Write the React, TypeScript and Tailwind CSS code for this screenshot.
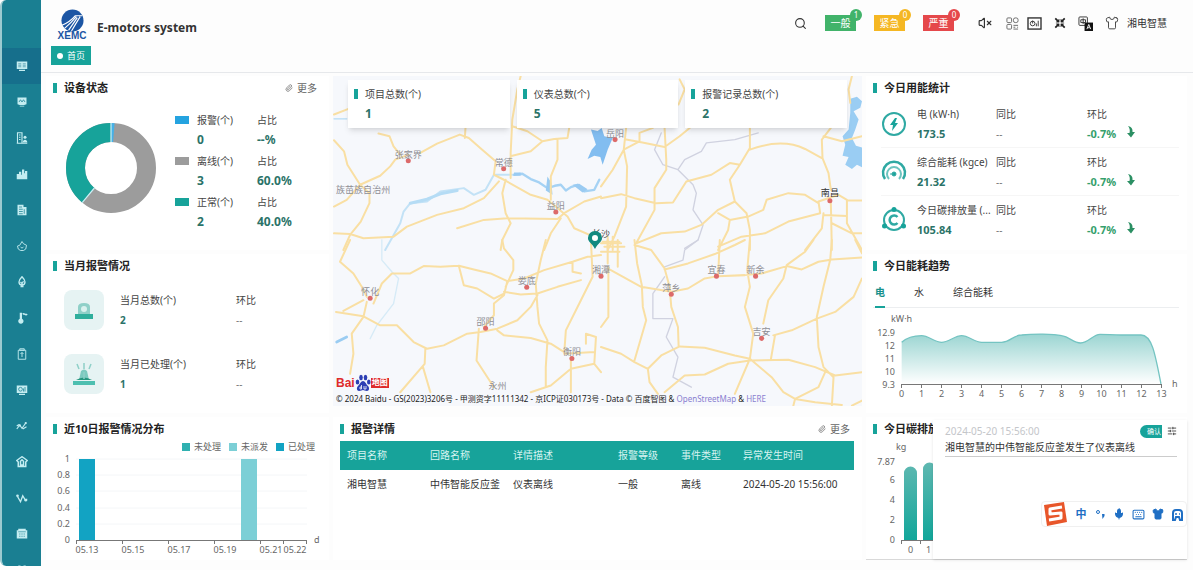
import { useState } from 'react'
import type { ReactNode } from 'react'
import { Search, VolumeX, Shirt, Paperclip, SlidersHorizontal, Mic, Keyboard } from 'lucide-react'

const MENU: { name: string; icon: ReactNode }[] = [
  { name: '首页', icon: <><path d="M1 2h14v10H1zM4 13h8v1.500H4z" fill="currentColor" /><path d="M3 5h4M3 7h4M3 9h4M9 5h4M9 7h4M9 9h4" stroke="#166f8c" strokeWidth=".7" /></> },
  { name: '监控', icon: <><path d="M2 2h12v9l-3 1H5l-3-1zM5 13h6v1H5z" fill="currentColor" /><path d="M4 8l2-3 2 3 2-3 2 3" stroke="#1a7f92" fill="none" /></> },
  { name: '建筑', icon: <><path d="M2 15V1h6v14M1 15h14M4 4h2M4 7h2M4 10h2" stroke="currentColor" strokeWidth="1.500" fill="none" /><circle cx="12" cy="7" r="2" fill="currentColor" /><path d="M9 14c0-5 6-5 6 0z" fill="currentColor" /></> },
  { name: '能源', icon: <path d="M1 15V8h3V5h3v4h1V2h3v5h1V4h3v11z" fill="currentColor" /> },
  { name: '报表', icon: <><path d="M2 1h8v3h4v11H2z" fill="currentColor" /><path d="M4 4h4M4 7h5M4 10h5M4 13h5M11 7v6" stroke="#1a7f92" /></> },
  { name: '燃气', icon: <path d="M8 2l2 3 4 2-1 5-3 2H6l-3-2-1-4 3-1zM6 9l2 2 2-2" stroke="currentColor" strokeWidth="1.200" fill="none" /> },
  { name: '用水', icon: <path d="M8 1c2 2 4 4 4 7a4 4 0 0 1-8 0c0-3 2-5 4-7zM6 8l2 2 2-3M6 14h4" stroke="currentColor" strokeWidth="1.800" fill="none" /> },
  { name: '温度', icon: <><path d="M5 1h3v8a3.500 3.500 0 1 1-3 0z" fill="currentColor" /><path d="M9 3c2-2 3 2 6 0" stroke="currentColor" strokeWidth="2" fill="none" /></> },
  { name: '巡检', icon: <path d="M3 3h10v12H3zM5 1h6v2H5zM8 6v6M6 8l2-2 2 2" stroke="currentColor" strokeWidth="1.200" fill="none" /> },
  { name: '分析', icon: <><path d="M1 2h14v10H1zM4 13h8v1.500H4z" fill="currentColor" /><circle cx="6" cy="7" r="2.500" stroke="#1a7f92" fill="none" /><path d="M10 10V6M12 10V4" stroke="#1a7f92" /></> },
  { name: '趋势', icon: <><path d="M1 12l4-5 3 4 5-7M1 8l3-2M9 12l5-3" stroke="currentColor" strokeWidth="1.500" fill="none" /><circle cx="13" cy="4" r="1.500" fill="currentColor" /><circle cx="5" cy="7" r="1.500" fill="currentColor" /></> },
  { name: '报警', icon: <path d="M5 3l3-2 3 2 4 3-2 2v6H3V8L1 6zM6 7v5h4V7L8 5z" stroke="currentColor" strokeWidth="2" fill="none" /> },
  { name: '曲线', icon: <><path d="M2 6l4 7 3-8 3 5h3" stroke="currentColor" strokeWidth="1.800" fill="none" /><circle cx="2" cy="5" r="1.800" fill="currentColor" /><circle cx="13" cy="11" r="1.800" fill="currentColor" /></> },
  { name: '设备', icon: <><path d="M3 1h10v2h2v11H1V3h2z" fill="currentColor" /><path d="M3 5h10M4 8h2M7 8h2M10 8h2M4 11h2M7 11h2M10 11h2" stroke="#1a7f92" strokeWidth=".8" /></> },
  { name: '系统', icon: <path d="M3 2h3v3H3zM10 2h3v3h-3zM1 7h14v7H1z" fill="currentColor" /> },
]

const STATUS = [
  { label: '报警(个)', count: '0', percent: '--%', swatch: 'bg-[#25a3e0]' },
  { label: '离线(个)', count: '3', percent: '60.0%', swatch: 'bg-[#9c9c9c]' },
  { label: '正常(个)', count: '2', percent: '40.0%', swatch: 'bg-[#17a39a]' },
]

const LEVELS = [
  { label: '一般', count: 1, color: 'bg-[#41b36a]' },
  { label: '紧急', count: 0, color: 'bg-[#f5b723]' },
  { label: '严重', count: 0, color: 'bg-[#e5484b]' },
]

const CITIES = [
  { name: '张家界', x: 408, y: 161 },
  { name: '常德', x: 503, y: 169 },
  { name: '益阳', x: 555, y: 212 },
  { name: '岳阳', x: 614, y: 140 },
  { name: '湘潭', x: 600, y: 276 },
  { name: '怀化', x: 370, y: 298 },
  { name: '娄底', x: 526, y: 287 },
  { name: '邵阳', x: 485, y: 328 },
  { name: '衡阳', x: 571, y: 358 },
  { name: '宜春', x: 715, y: 276 },
  { name: '新余', x: 754, y: 276 },
  { name: '萍乡', x: 670, y: 294 },
  { name: '吉安', x: 760, y: 338 },
]

const ROADS_NW = 'M12 212L42 245 52 285 90 345 118 370 118 400 92 455 60 495 40 540M12 410L50 390 90 345 150 318 180 290 195 270 235 255M145 192L178 200 190 230 210 255M270 250L320 222 388 195 415 205 455 240 495 275 490 315 520 330 600 375 650 390 710 440 730 475 800 505M405 175L403 205M12 490L60 492 100 505 190 500 230 470 320 435 400 415 460 385 505 335M380 475L460 450 530 445 680 447 700 430 760 395 810 380M525 330L515 370 525 430 540 460 515 510 510 540M540 325L540 250 545 150 560 60 570 20M545 170L590 185 635 215 600 245 545 258M635 215L670 208 710 205 715 175M680 210L680 270 660 320 660 390M690 445L660 490 640 540M12 135L55 118'
const ROADS_NE = 'M0 385L60 373 100 385 165 400 215 398 255 335 330 315 385 280 415 285 445 235 445 175M75 175L68 240 78 290 75 410 40 500 20 540M0 350L35 300 68 240 115 215 115 190 155 175M75 210L120 218 190 232 235 200 265 175M190 175L195 270 195 300 160 355 160 420 105 520M445 240Q540 205 610 238L660 265M415 285L385 330 400 395 435 430 445 480 445 540M105 520L180 490 250 485 300 465 350 420 400 395M350 430L385 450 440 440 485 420 495 390 560 370 610 375 650 400M385 450L380 480 350 540M350 530L420 500 490 490 560 455 655 430M655 430L650 395 710 375 735 390 735 460 780 540M735 392L780 392M665 435L735 438M687 400L690 540M665 430L660 475 610 540M690 460L750 490 780 490M687 175L660 210 662 265 680 310 687 360M665 200L720 215 780 200M232 105L250 60 235 30M750 20L740 60 745 100M5 515h50M10 530h60M20 500v40M35 500v40'
const ROADS_SW = 'M60 0L30 65 70 100 95 140 110 170M130 190L155 130 185 100 240 100 280 78 330 80 385 77 430 88 480 100 530 123 580 115 640 90 725 65 770 50 810 45M18 215L100 228 150 255 200 255 250 305 290 325 340 315 410 280 450 275 500 265 560 240 600 200 620 165M40 212L100 180M110 185L100 230 65 280 70 340 60 400M385 77L400 135 440 145 490 175 520 160M530 123L520 165 490 190 490 225 460 260M515 0L520 25 548 60 548 90 525 140M520 155L570 163 620 160 680 140 750 120M645 0L630 60 615 130 620 200 625 250 650 300 645 380 645 440M500 270L520 285 600 293 660 310 700 335M780 0L785 110 750 180 705 270 700 340M285 325L283 370 210 455M278 380L300 455M445 265L438 360 490 440M720 350L720 455M600 455L660 435 720 385 790 370 810 395M725 65L725 95 750 100M765 310L765 280 795 290 790 370M700 340L790 335'
const ROADS_SE = 'M100 0L108 70 122 135 125 200 135 240 100 360M20 85L120 140 210 155 260 145 310 115 350 108 430 105 480 100 555 78 600 88 650 65 690 58 780 52M100 15L150 30 190 85 205 140 210 200 230 260 232 318M190 88L260 70 340 42 400 15 430 0M350 108L355 0M445 0L437 90 445 140 430 200 455 280 445 355 400 460M635 0L610 35 555 75 545 115 500 180 485 250M690 0L685 60 665 140 645 230 650 320 665 380 695 410 690 495M515 285L570 270 645 235 700 215 755 170 780 115M520 285L508 355M0 320L60 340 100 365 140 385 145 425 170 460M140 385L180 345 235 318 310 322 400 345 445 355 510 410 545 455 580 475 640 485 720 493M190 455L250 405 310 402 380 370 445 360 560 358 640 380 700 405 780 395M575 495L580 475 650 440 670 395M750 495L780 480M22 80L22 230 0 260M760 0L780 40M0 10h60M0 35h55M20 0v70M50 0v80'

function Section({ title, more, className = '', children }: { title: string; more?: boolean; className?: string; children: ReactNode }) {
  return (
    <section className={`relative bg-white pl-[7px] pr-2 ${className}`}>
      <div className="flex h-6 items-center">
        <span className="h-[10px] w-1 bg-[#17a39a]" />
        <h2 className="ml-[7px] text-[11px] font-bold text-[#222]">{title}</h2>
        {more && (
          <a href="#more" className="mr-1 ml-auto flex items-center gap-1 text-[10px] text-[#666]">
            <Paperclip size={8} />更多
          </a>
        )}
      </div>
      {children}
    </section>
  )
}

function Sidebar() {
  return (
    <aside className="sticky top-0 h-screen w-[41px] shrink-0 pb-1">
      <nav className="h-full overflow-hidden rounded-l-md border-l-2 border-[#9ccad0] bg-[#1a7f92] pt-12">
        {MENU.map((m, i) => (
          <a key={m.name} href={`#menu-${i}`} aria-label={m.name}
            className={`flex h-9 items-center justify-center text-[#c4edf1] ${i === 0 ? 'bg-[#166f8c]' : ''}`}>
            <svg viewBox="0 0 16 16" className="size-3">{m.icon}</svg>
          </a>
        ))}
      </nav>
    </aside>
  )
}

function Header() {
  return (
    <header className="border-b border-[#e6e8eb] pl-[10px] pr-[26px]">
      <div className="flex h-[46px] items-start">
        <div className="flex w-[42px] flex-col items-center pt-[9px]">
          <svg viewBox="0 0 24 24" className="size-[23px]">
            <circle cx="12" cy="12" r="11.500" fill="#1c56a4" />
            <path d="M1 17Q9 14 15 7l7 0M4 20Q11 14 16 8M8 22Q13 15 17 9M11 23Q15 16 20 8" stroke="#fff" strokeWidth="1.200" fill="none" />
          </svg>
          <span className="font-['Liberation_Sans'] text-[10px] leading-2 font-bold text-[#1c56a4]">XEMC</span>
        </div>
        <h1 className="ml-[4px] pt-5 text-xs leading-4 font-bold text-[#333]">E-motors system</h1>
        <div className="ml-auto flex items-center pt-[15px] text-[#333]">
          <button aria-label="搜索"><Search size={13} /></button>
          <div className="ml-[18px] mr-7 flex gap-[18px]">
            {LEVELS.map(l => (
              <button key={l.label} className={`relative h-4 w-[31px] text-[10px] leading-4 text-white ${l.color}`}>
                {l.label}
                <span className={`absolute -top-[6px] -right-[6px] size-3 rounded-full text-[8px] leading-3 ${l.color}`}>{l.count}</span>
              </button>
            ))}
          </div>
          <div className="-ml-1 flex items-center gap-3">
            <button aria-label="静音" className="mr-[2px]"><VolumeX size={14} /></button>
            <div className="flex items-center gap-2">
              <button aria-label="二维码">
                <svg viewBox="0 0 14 14" className="size-[13px]" fill="none" stroke="#666">
                  <rect x="1" y="1" width="5" height="5" rx="1" /><rect x="8" y="1" width="5" height="5" rx="2" /><rect x="1" y="8" width="5" height="5" rx="1" />
                  <path d="M8 9h5M8 11h2M12 11h1M8 13h5" />
                </svg>
              </button>
              <button aria-label="大屏">
                <svg viewBox="0 0 16 14" className="h-[13px] w-[15px]" fill="none" stroke="#333">
                  <rect x="1" y="1" width="14" height="12" strokeWidth="1.500" /><circle cx="6" cy="7" r="2.500" /><path d="M6 7V4M10 10V7M12 10V4" />
                </svg>
              </button>
            </div>
            <button aria-label="全屏">
              <svg viewBox="0 0 14 14" className="size-3" fill="#222" stroke="#222">
                <path d="M6 6H2.500L6 2.500zM8 6V2.500L11.500 6zM6 8v3.500L2.500 8zM8 8h3.500L8 11.500z" strokeWidth=".5" /><path d="M1.500 1.500L5 5M12.500 1.500L9 5M1.500 12.500L5 9M12.500 12.500L9 9" strokeWidth="2" />
              </svg>
            </button>
            <button aria-label="语言">
              <svg viewBox="0 0 16 16" className="size-[15px]">
                <rect x="1" y="1" width="9" height="9" rx="1" fill="#fff" stroke="#333" /><path d="M3 4h5v3H3zM5.500 2.500v6" stroke="#333" fill="none" />
                <rect x="7" y="7" width="9" height="9" fill="#111" /><path d="M9.500 14l2-5 2 5M10.500 12.500h2" stroke="#fff" fill="none" />
              </svg>
            </button>
            <button aria-label="主题"><Shirt size={14} strokeWidth={1.500} /></button>
            <span className="-ml-1 text-[10px]">湘电智慧</span>
          </div>
        </div>
      </div>
      <div className="flex h-[26px] items-start">
        <a href="#home" className="flex h-[19px] items-center gap-1 bg-[#17a39a] px-[6px] text-[9px] text-white">
          <span className="size-[6px] rounded-full bg-white" />首页
        </a>
      </div>
    </header>
  )
}

function DeviceStatus() {
  return (
    <Section title="设备状态" more className="min-h-[174px]">
      <div className="flex pt-[10px] pl-3">
        <svg viewBox="-46 -46 92 92" className="mt-3 size-[92px] shrink-0">
          <g fill="none" strokeWidth="19">
            <circle r="35.500" stroke="#9c9c9c" />
            <circle r="35.500" stroke="#17a39a" pathLength="100" strokeDasharray="39 100" strokeDashoffset="-61" transform="rotate(-90)" />
            <circle r="35.500" stroke="#45b1e8" pathLength="100" strokeDasharray="1.300 100" transform="rotate(-90)" />
          </g>
          <path d="M0-45V-26M-28.800 34.600L-16.600 20" stroke="#cdeff5" strokeWidth="1.200" />
        </svg>
        <dl className="ml-[18px] flex flex-col gap-px text-[10px] leading-5 text-[#444]">
          {STATUS.map(s => (
            <div key={s.label} className="grid grid-cols-[22px_60px_auto]">
              <span className={`mt-[6px] h-2 w-[14px] ${s.swatch}`} />
              <dt>{s.label}</dt>
              <dt>占比</dt>
              <dd className="col-start-2 text-xs leading-5 font-bold text-[#2b7368]">{s.count}</dd>
              <dd className="text-xs leading-5 font-bold text-[#2b7368]">{s.percent}</dd>
            </div>
          ))}
        </dl>
      </div>
    </Section>
  )
}

function AlarmTile({ label, value, children }: { label: string; value: string; children: ReactNode }) {
  return (
    <div className="flex items-center">
      <div className="flex size-10 items-center justify-center rounded-lg bg-[#e6f3f3]">
        <svg viewBox="0 0 24 24" className="size-6">{children}</svg>
      </div>
      <div className="ml-4 w-[116px] text-[10px] leading-5 text-[#444]">
        <p>{label}</p>
        <p className="font-bold text-[#2b7368]">{value}</p>
      </div>
      <div className="text-[10px] leading-5 text-[#444]">
        <p>环比</p>
        <p className="text-[#777]">--</p>
      </div>
    </div>
  )
}

function MonthAlarms() {
  return (
    <Section title="当月报警情况" className="min-h-[159px]">
      <div className="flex flex-col gap-6 pt-3 pl-[11px]">
        <AlarmTile label="当月总数(个)" value="2">
          <path d="M6 16V9q0-4 6-4t6 4v7z" fill="#8fd0c8" />
          <circle cx="12" cy="11" r="3" fill="#d9f1ee" />
          <path d="M3 16h18v5H3z" fill="#2fae9c" />
        </AlarmTile>
        <AlarmTile label="当月已处理(个)" value="1">
          <path d="M7 18l2-9q3-3 6 0l2 9z" fill="#7ccabf" />
          <path d="M4 18q8-5 16 0z" fill="#27967f" />
          <path d="M1 19h22v4H1z" fill="#4dbfb0" />
          <path d="M12 1v6M5 2l2 5M19 2l-2 5M12 10v7" stroke="#8fd0c8" strokeWidth="1.500" />
        </AlarmTile>
      </div>
    </Section>
  )
}

function AlarmChart() {
  return (
    <Section title="近10日报警情况分布" className="min-h-[143px]">
      <div className="flex h-3 justify-end gap-2 pr-[6px] text-[9px] leading-3 text-[#666]">
        <span className="flex items-center gap-1"><i className="size-2 bg-[#2fb0b0]" />未处理</span>
        <span className="flex items-center gap-1"><i className="size-2 bg-[#7ccfd6]" />未派发</span>
        <span className="flex items-center gap-1"><i className="size-2 bg-[#12a3c3]" />已处理</span>
      </div>
      <svg viewBox="53 453 268 105" className="block w-full text-[9px]" fill="#666">
        <path d="M76 459h231M76 475h231M76 491h231M76 508h231M76 524h231" stroke="#f4f6f8" />
        <path d="M79 459h16v81H79z" fill="#12a3c3" />
        <path d="M241 459h16v81h-16z" fill="#7ccfd6" />
        <path d="M76 540.500h231M76.500 540v4M122.500 540v4M168.500 540v4M214.500 540v4M260.500 540v4M283.500 540v4M306.500 540v4" stroke="#777" fill="none" />
        <g textAnchor="end">
          <text x="70" y="462">1</text><text x="70" y="478">0.8</text><text x="70" y="494">0.6</text>
          <text x="70" y="511">0.4</text><text x="70" y="527">0.2</text><text x="70" y="543">0</text>
        </g>
        <g textAnchor="middle">
          <text x="87" y="553">05.13</text><text x="133" y="553">05.15</text><text x="179" y="553">05.17</text>
          <text x="225" y="553">05.19</text><text x="271" y="553">05.21</text><text x="295" y="553">05.22</text>
        </g>
        <text x="314" y="543">d</text>
      </svg>
    </Section>
  )
}

function MapPanel() {
  const totals = [
    { label: '项目总数(个)', value: 1 },
    { label: '仪表总数(个)', value: 5 },
    { label: '报警记录总数(个)', value: 2 },
  ]
  return (
    <div className="relative mb-[7px]">
      <svg viewBox="333 76 527 330" preserveAspectRatio="xMidYMid slice" className="block h-[330px] w-full bg-[#f6f8fc]">
        <g fill="none" strokeLinejoin="round" strokeLinecap="round">
          <g transform="translate(330 70) scale(.3333)">
            <path d="M165 540L210 460 220 425 240 400 290 395 330 365 400 355 430 375 465 360 490 315 550 315" stroke="#c3e2f6" strokeWidth="6" />
            <path d="M240 400L290 388 330 372 380 362" stroke="#b5dcf5" strokeWidth="9" />
            <path d="M550 315L575 312 600 328 625 338 650 355 672 348 690 345 705 362 720 352 740 345 760 365 790 360 805 330" stroke="#a5d2f4" strokeWidth="7" />
            <path d="M650 320L662 340 665 375 645 362zM725 345L745 342 770 358 755 368zM550 308h20v10h-20z" fill="#9acbf2" />
            <path d="M780 180L800 184 812 175 820 200 845 205 830 240 815 285 808 262 790 258 770 268 782 240 795 225z" fill="#82bdf0" />
            <path d="M12 148L50 148" stroke="#b5dcf5" strokeWidth="4" />
            <path d={ROADS_NW} stroke="#f9dfa3" strokeWidth="6" />
          </g>
          <g transform="translate(600 70) scale(.3333)">
            <path d="M745 88L765 82 780 95 775 115 755 125 770 150 760 180 750 205 762 228 785 235 785 295 765 285 750 298 730 285 740 262 722 258 730 225 722 200 740 180 745 130z" fill="#9acdf3" />
            <path d="M180 190L160 240 185 285 230 300 250 270 300 245 315 220 400 210 470 190M230 300L275 345 285 370 275 420 305 465 290 510 250 535" stroke="#d0d2e0" strokeWidth="4" />
            <path d={ROADS_NE} stroke="#f9dfa3" strokeWidth="6" />
          </g>
          <g transform="translate(330 240) scale(.3333)">
            <path d="M155 0L155 60 185 95 205 115 190 190 140 255 120 295" stroke="#d6ebf7" strokeWidth="4" />
            <path d="M20 305L50 290" stroke="#9accf2" strokeWidth="8" />
            <path d={ROADS_SW} stroke="#f9dfa3" strokeWidth="6" />
          </g>
          <g transform="translate(600 240) scale(.3333)">
            <path d="M290 0L250 30 245 60 190 80M190 110L155 160 155 235 215 235 195 290 230 350 215 410 270 440" stroke="#d0d2e0" strokeWidth="4" />
            <path d={ROADS_SE} stroke="#f9dfa3" strokeWidth="6" />
          </g>
        </g>
        <g textAnchor="middle" className="text-[9px]" fill="#8e8e94">
          {CITIES.map(c => (
            <g key={c.name}>
              <circle cx={c.x} cy={c.y} r="2.500" fill="#dc6a6a" />
              <text x={c.x} y={c.y - 3}>{c.name}</text>
            </g>
          ))}
          <text x="363" y="193">族苗族自治州</text>
          <text x="497" y="388">永州</text>
          <text x="600" y="237" fill="#444">长沙</text>
          <circle cx="828" cy="201" r="2.500" fill="#dc6a6a" />
          <text x="828" y="196" fill="#333">南昌</text>
        </g>
        <path d="M594 249c-3-6-7-7-7-11a7 7 0 0 1 14 0c0 4-4 5-7 11z" fill="#12897f" />
        <circle cx="594" cy="238" r="3" fill="#fff" />
      </svg>
      <div className="absolute inset-x-[15px] top-1 grid grid-cols-3 gap-[7px]">
        {totals.map(t => (
          <div key={t.label} className="flex h-12 gap-[7px] bg-white/95 pt-1 pl-[6px] shadow-md">
            <span className="mt-[5px] h-[10px] w-1 bg-[#17a39a]" />
            <div className="text-[10px] leading-5 text-[#444]">
              <p>{t.label}</p>
              <p className="text-xs leading-5 font-bold text-[#2b7368]">{t.value}</p>
            </div>
          </div>
        ))}
      </div>
      <div className="absolute bottom-0 left-[3px]">
        <div className="flex items-center font-['Liberation_Sans','Noto_Sans_CJK_SC',sans-serif]">
          <b className="text-xs leading-3 text-[#de2a2b]">Bai</b>
          <svg viewBox="0 0 16 18" className="h-[18px] w-4" fill="#2c3fb4">
            <ellipse cx="2.500" cy="8" rx="1.800" ry="2.500" /><ellipse cx="6" cy="3.500" rx="1.800" ry="2.800" /><ellipse cx="10.500" cy="3.500" rx="1.800" ry="2.800" /><ellipse cx="13.800" cy="8" rx="1.800" ry="2.500" />
            <path d="M8 7c2 0 3 3 5 5s1 5-1 5-3-1-4-1-2 1-4 1-3-3-1-5 3-5 5-5z" />
            <path d="M6.500 11v4H5v-2h1.500M9 12v3h2v-3" stroke="#fff" strokeWidth=".8" fill="none" />
          </svg>
          <b className="bg-[#de2a2b] px-px text-[8px] leading-[10px] text-white">地图</b>
        </div>
        <p className="text-[8px] leading-[14px] whitespace-nowrap text-[#222]">
          © 2024 Baidu - GS(2023)3206号 - 甲测资字11111342 - 京ICP证030173号 - Data © 百度智图 &amp; <a href="#osm" className="text-[#8a7fd0]">OpenStreetMap</a> &amp; <a href="#here" className="text-[#8a7fd0]">HERE</a>
        </p>
      </div>
    </div>
  )
}

function AlarmTable() {
  return (
    <Section title="报警详情" more className="min-h-[143px]">
      <table className="w-full table-fixed text-left text-[10px] text-[#333]">
        <thead className="bg-[#17a39a] text-[#d6f4f1]">
          <tr className="h-[29px]">
            <th className="w-[83px] pl-[7px] font-normal">项目名称</th>
            <th className="w-[83px] pl-[7px] font-normal">回路名称</th>
            <th className="pl-[7px] font-normal">详情描述</th>
            <th className="w-[63px] pl-[7px] font-normal">报警等级</th>
            <th className="w-[62px] pl-[7px] font-normal">事件类型</th>
            <th className="w-[118px] pl-[7px] font-normal">异常发生时间</th>
          </tr>
        </thead>
        <tbody>
          <tr className="h-[29px] whitespace-nowrap">
            <td className="pl-[7px]">湘电智慧</td>
            <td className="pl-[7px]">中伟智能反应釜</td>
            <td className="pl-[7px]">仪表离线</td>
            <td className="pl-[7px]">一般</td>
            <td className="pl-[7px]">离线</td>
            <td className="pl-[7px]">2024-05-20 15:56:00</td>
          </tr>
        </tbody>
      </table>
    </Section>
  )
}

function EnergyRow({ label, value, children }: { label: string; value: string; children: ReactNode }) {
  return (
    <div className="grid h-12 grid-cols-[36px_79px_91px_auto_1fr] items-center text-[10px] leading-5 text-[#444]">
      <svg viewBox="0 0 26 26" className="size-[26px]" fill="none" stroke="#2fa9a3">{children}</svg>
      <div>
        <p className="whitespace-nowrap">{label}</p>
        <p className="text-[11px] leading-5 font-bold text-[#2b7368]">{value}</p>
      </div>
      <div>
        <p>同比</p>
        <p className="text-[#777]">--</p>
      </div>
      <div>
        <p>环比</p>
        <p className="text-[11px] leading-5 font-bold text-[#35a06c]">-0.7%</p>
      </div>
      <svg viewBox="0 0 10 12" className="mt-4 ml-[10px] h-3 w-[10px]" fill="#2b8f63">
        <path d="M2 0q5 1 4.500 6H9l-4 5.500L1 7h2.500q1-4-1.500-7z" />
      </svg>
    </div>
  )
}

function EnergyToday() {
  return (
    <Section title="今日用能统计" className="min-h-[174px]">
      <div className="divide-y divide-[#f6f6f6] pl-2">
        <EnergyRow label="电 (kW·h)" value="173.5">
          <circle cx="13" cy="13" r="11" strokeWidth="2" />
          <path d="M14 7l-5 7h3l-1 6 6-8h-3l2-5z" fill="#17a39a" stroke="none" />
        </EnergyRow>
        <EnergyRow label="综合能耗 (kgce)" value="21.32">
          <path d="M4 20a11 11 0 1 1 18 0" strokeWidth="2.500" />
          <path d="M8 20a7 7 0 1 1 10 0" strokeWidth="2" stroke="#6cc4bf" />
          <circle cx="13" cy="15" r="2" fill="#17a39a" /><path d="M13 15h-4" />
        </EnergyRow>
        <EnergyRow label="今日碳排放量 (..." value="105.84">
          <circle cx="13" cy="13" r="10" strokeWidth="2" />
          <path d="M16.500 10a4.500 4.500 0 1 0 0 6" strokeWidth="2.500" />
          <g fill="#17a39a" stroke="none"><circle cx="13" cy="2.500" r="2.500" /><circle cx="3.500" cy="19" r="2.500" /><circle cx="22.500" cy="19" r="2.500" /></g>
        </EnergyRow>
      </div>
    </Section>
  )
}

function EnergyTrend() {
  const [tab, setTab] = useState('电')
  return (
    <Section title="今日能耗趋势" className="min-h-[159px]">
      <div className="flex gap-[29px] border-b border-[#eceef0] pl-[2px]">
        {['电', '水', '综合能耗'].map(t => (
          <button key={t} onClick={() => setTab(t)}
            className={`-mb-px h-[30px] border-b-2 text-[10px] ${tab === t ? 'border-[#17a39a] font-bold text-[#17908a]' : 'border-transparent text-[#333]'}`}>
            {t}
          </button>
        ))}
      </div>
      <svg viewBox="873 309 306 92" className="block w-full text-[9px]" fill="#666">
        <defs>
          <linearGradient id="trend" x1="0" y1="0" x2="0" y2="1">
            <stop offset="0" stopColor="#9bd5d2" />
            <stop offset="1" stopColor="#fff" />
          </linearGradient>
        </defs>
        <g transform="translate(860 250) scale(.3333)">
          <path d="M125 280C145 262 165 260 185 260S225 280 245 280 285 260 305 260 345 280 365 280H425C450 280 460 258 485 258 520 254 580 254 605 260 630 264 640 282 662 282S700 256 720 256 760 258 783 258H843C875 258 885 310 903 405H125z" fill="url(#trend)" />
          <path d="M125 280C145 262 165 260 185 260S225 280 245 280 285 260 305 260 345 280 365 280H425C450 280 460 258 485 258 520 254 580 254 605 260 630 264 640 282 662 282S700 256 720 256 760 258 783 258H843C875 258 885 310 903 405" fill="none" stroke="#74c4c2" strokeWidth="4" />
        </g>
        <path d="M901 385.500h260" stroke="#777" />
        <g textAnchor="middle">
          {Array.from({ length: 14 }, (_, i) => (
            <g key={i}>
              <path d={`M${901.5 + i * 20} 385v4`} stroke="#777" />
              <text x={901.5 + i * 20} y="398">{i}</text>
            </g>
          ))}
        </g>
        <g textAnchor="end">
          <text x="895" y="337">12.9</text><text x="895" y="350">12</text><text x="895" y="363">11</text>
          <text x="895" y="376">10</text><text x="895" y="389">9.3</text>
        </g>
        <text x="891" y="323">kW·h</text>
        <text x="1172" y="388">h</text>
      </svg>
    </Section>
  )
}

function ImeBar() {
  return (
    <div className="absolute right-0 bottom-8 flex h-[26px] items-center gap-[7px] rounded-sm border border-[#f0f0f0] bg-white pr-[2px] text-[#1f6fc4]">
      <svg viewBox="0 0 26 26" className="size-[26px]">
        <path d="M2 4L22 1l3 20L5 25z" fill="#e8562a" />
        <path d="M20 6L8 8v5l11-1v5L7 19" stroke="#fff" strokeWidth="3" strokeLinejoin="round" fill="none" />
      </svg>
      <button className="w-3 text-[11px] font-bold">中</button>
      <button aria-label="标点" className="w-3">
        <svg viewBox="0 0 12 12" className="size-3"><circle cx="4" cy="4" r="1.500" fill="none" stroke="currentColor" /><path d="M8 6h2.500v2L8.500 11z" fill="currentColor" /></svg>
      </button>
      <button aria-label="语音"><Mic size={12} fill="currentColor" /></button>
      <button aria-label="键盘"><Keyboard size={13} /></button>
      <button aria-label="皮肤"><Shirt size={12} fill="currentColor" /></button>
      <button aria-label="工具箱">
        <svg viewBox="0 0 13 13" className="size-[13px]" fill="none" stroke="currentColor" strokeWidth="2">
          <path d="M2 12V5q0-3 3-3h3q3 0 3 3v7H9L8 9H5l-1 3z" /><path d="M4 6h2M8 6h1" strokeWidth="1.500" />
        </svg>
      </button>
    </div>
  )
}

function CarbonToday() {
  return (
    <Section title="今日碳排放趋势" className="min-h-[143px] border-b border-[#d9d9d9]">
      <svg viewBox="873 441 306 115" className="block w-full text-[9px]" fill="#666">
        <defs>
          <linearGradient id="carbon" x1="0" y1="0" x2="0" y2="1">
            <stop offset="0" stopColor="#5fb8b1" />
            <stop offset="1" stopColor="#12a69a" />
          </linearGradient>
        </defs>
        <path d="M904 540v-67a6.500 6.500 0 0 1 13 0v67zM923 540v-71a6.500 6.500 0 0 1 13 0v71z" fill="url(#carbon)" />
        <path d="M901 540.500h278M901.500 540v4M920.500 540v4" stroke="#777" fill="none" />
        <g textAnchor="end">
          <text x="895" y="465">7.87</text><text x="895" y="483">6</text><text x="895" y="503">4</text>
          <text x="895" y="523">2</text><text x="895" y="543">0</text>
        </g>
        <text x="896" y="450">kg</text>
        <text x="908" y="553">0</text>
        <text x="926" y="553">1</text>
      </svg>
      <div className="absolute top-[3px] right-0 bottom-0 left-[67px] bg-white pt-1 pr-[10px] pl-3 shadow-sm">
        <div className="flex h-[14px] items-center text-[10px]">
          <time className="text-[#c4c6ca]">2024-05-20 15:56:00</time>
          <button className="ml-auto h-[13px] rounded-l-full bg-[#17a39a] pr-px pl-[7px] text-[7px] leading-[13px] text-white">确认</button>
          <button aria-label="设置" className="ml-[5px] text-[#333]"><SlidersHorizontal size={10} /></button>
        </div>
        <p className="border-b border-[#ccc] text-[10px] leading-[18px] text-[#333]">湘电智慧的中伟智能反应釜发生了仪表离线</p>
        <ImeBar />
      </div>
    </Section>
  )
}

export default function App() {
  return (
    <div className="flex min-h-screen bg-[#fdfdfd] font-['Noto_Sans','Noto_Sans_CJK_SC',sans-serif]">
      <Sidebar />
      <div className="min-w-0 flex-1">
        <Header />
        <main className="grid grid-cols-[283px_minmax(0,1fr)_321px] gap-1 pt-[3px] pr-[6px] pl-[5px]">
          <div className="flex flex-col gap-1">
            <DeviceStatus />
            <MonthAlarms />
            <AlarmChart />
          </div>
          <div className="flex flex-col gap-1">
            <MapPanel />
            <AlarmTable />
          </div>
          <div className="flex flex-col gap-1">
            <EnergyToday />
            <EnergyTrend />
            <CarbonToday />
          </div>
        </main>
      </div>
    </div>
  )
}
